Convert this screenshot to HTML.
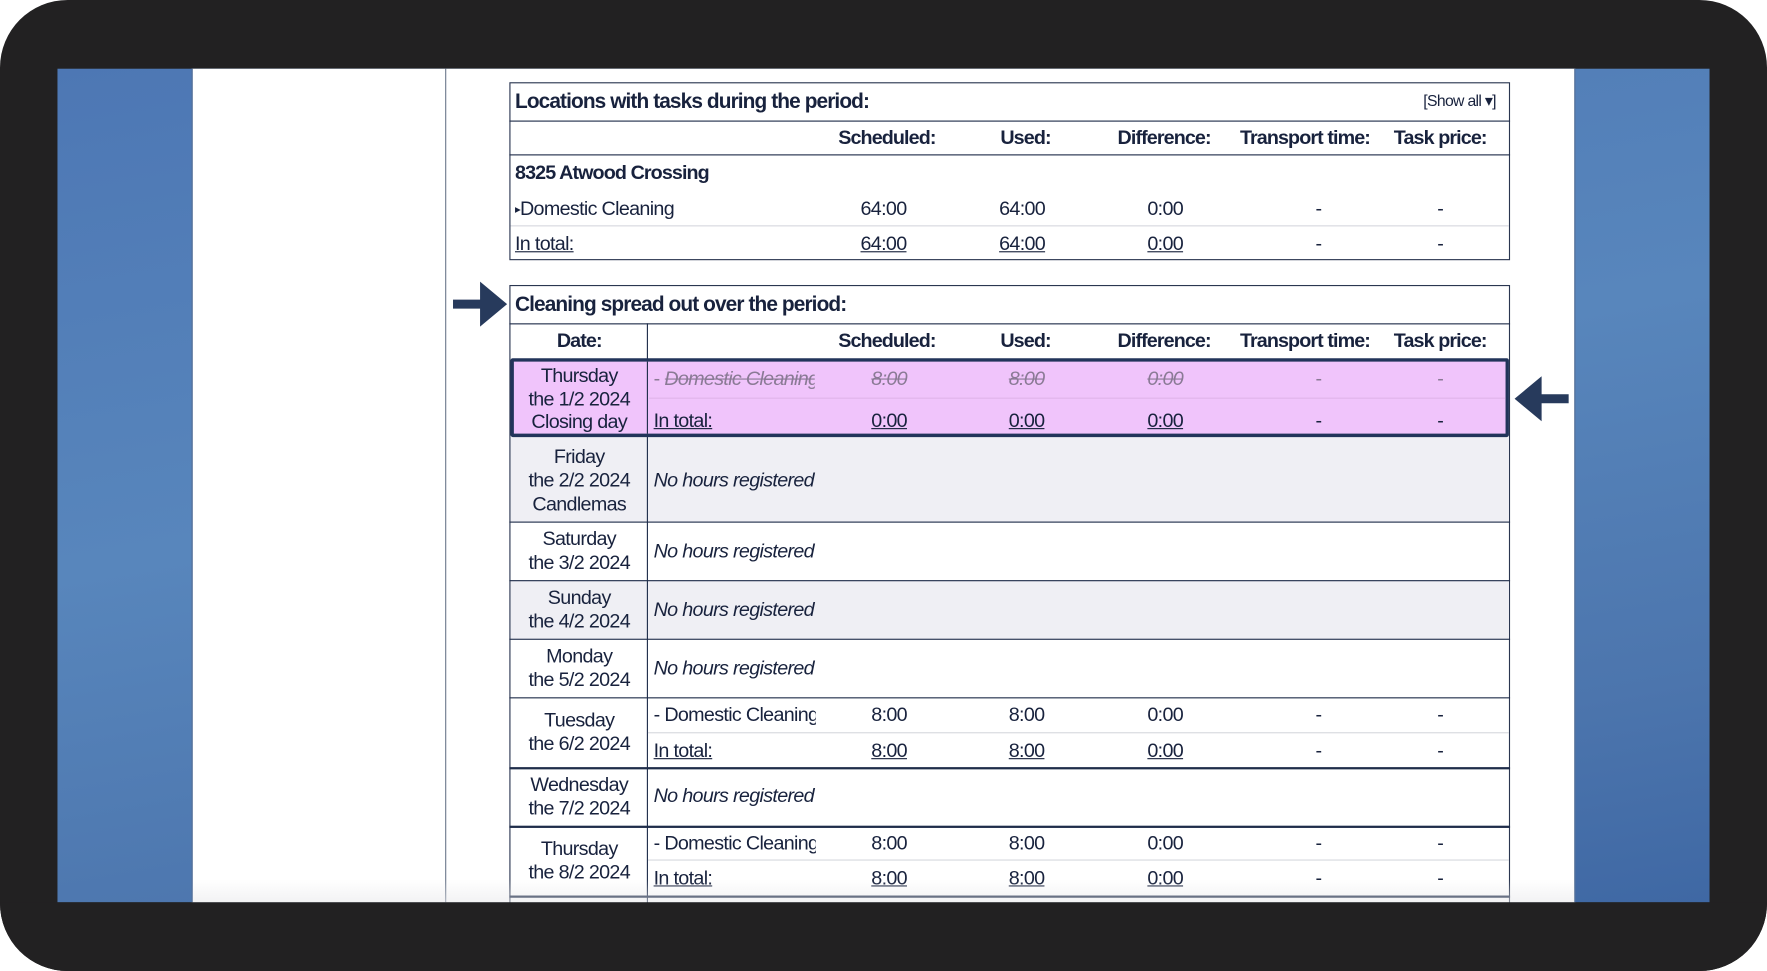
<!DOCTYPE html>
<html><head><meta charset="utf-8">
<style>
html,body{margin:0;padding:0;width:1767px;height:971px;overflow:hidden;background:#fff}
#stage{position:absolute;left:0;top:0;width:1568px;height:862px;transform:scale(1.12691,1.12645);transform-origin:0 0;background:#222122;border-radius:60px;overflow:hidden;font-family:"Liberation Sans",sans-serif;color:#18223d;font-size:17.5px;letter-spacing:-0.6px}
.a{position:absolute;white-space:nowrap}
.c{transform:translateX(-50%);text-align:center}
.b{font-weight:bold;letter-spacing:-0.8px}
.u{text-decoration:underline}
.i{font-style:italic}
.hl{position:absolute;background:#1f2d4a}
.ll{position:absolute;background:#d6d8de}
.st{text-decoration:line-through;color:#8a7a95;font-style:italic}
</style></head><body>
<div id="stage">
  <div class="a" style="left:51px;top:61px;width:1466px;height:740px;background:linear-gradient(170deg,#4d77b4,#5886bc 45%,#4c75ad 80%,#3f68a4)"></div>
  <div class="a" style="left:170px;top:61px;width:1228px;height:740px;background:#fff;border-left:1px solid #3b5b8a;border-right:1px solid #3b5b8a;box-sizing:border-box"></div>
  <div class="a" style="left:395px;top:61px;width:1px;height:740px;background:#6e7a8e"></div>

  <!-- Table 1 -->
  <div class="a" style="left:452px;top:73px;width:888px;height:158px;border:1px solid #2a3650;box-sizing:border-box"></div>
  <div class="hl" style="left:452px;top:107px;width:888px;height:1px"></div>
  <div class="hl" style="left:452px;top:137px;width:888px;height:1px"></div>
  <div class="ll" style="left:453px;top:200px;width:886px;height:1px"></div>
  <div class="a b" style="left:457px;top:79px;font-size:18.5px">Locations with tasks during the period:</div>
  <div class="a" style="left:1263px;top:81px;font-size:14px">[Show all ▾]</div>
  <div class="a b c" style="left:787px;top:112px">Scheduled:</div>
  <div class="a b c" style="left:910px;top:112px">Used:</div>
  <div class="a b c" style="left:1033px;top:112px">Difference:</div>
  <div class="a b c" style="left:1158px;top:112px">Transport time:</div>
  <div class="a b c" style="left:1278px;top:112px">Task price:</div>
  <div class="a b" style="left:457px;top:143px">8325 Atwood Crossing</div>
  <div class="a" style="left:457px;top:175px"><span style="font-size:10px;vertical-align:2px">▸</span>Domestic Cleaning</div>
  <div class="a c" style="left:784px;top:175px">64:00</div>
  <div class="a c" style="left:907px;top:175px">64:00</div>
  <div class="a c" style="left:1034px;top:175px">0:00</div>
  <div class="a c" style="left:1170px;top:175px">-</div>
  <div class="a c" style="left:1278px;top:175px">-</div>
  <div class="a u" style="left:457px;top:206px">In total:</div>
  <div class="a c u" style="left:784px;top:206px">64:00</div>
  <div class="a c u" style="left:907px;top:206px">64:00</div>
  <div class="a c u" style="left:1034px;top:206px">0:00</div>
  <div class="a c" style="left:1170px;top:206px">-</div>
  <div class="a c" style="left:1278px;top:206px">-</div>

  <!-- Table 2 -->
  <div class="a" style="left:452px;top:253px;width:888px;height:560px;border:1px solid #2a3650;box-sizing:border-box"></div>
  <div class="a" style="left:453px;top:388px;width:886px;height:75px;background:#efeff4"></div>
  <div class="a" style="left:453px;top:515px;width:886px;height:52px;background:#efeff4"></div>
  <div class="hl" style="left:452px;top:287px;width:888px;height:1px"></div>
  <div class="hl" style="left:574px;top:287px;width:1px;height:530px"></div>
  <div class="hl" style="left:452px;top:463px;width:888px;height:1px"></div>
  <div class="hl" style="left:452px;top:515px;width:888px;height:1px"></div>
  <div class="hl" style="left:452px;top:567px;width:888px;height:1px"></div>
  <div class="hl" style="left:452px;top:619px;width:888px;height:1px"></div>
  <div class="hl" style="left:452px;top:681px;width:888px;height:1.5px"></div>
  <div class="hl" style="left:452px;top:733px;width:888px;height:1.5px"></div>
  <div class="hl" style="left:452px;top:795px;width:888px;height:1.5px"></div>
  <div class="ll" style="left:575px;top:650px;width:764px;height:1px"></div>
  <div class="ll" style="left:575px;top:763px;width:764px;height:1px"></div>

  <div class="a b" style="left:457px;top:259px;font-size:18.5px">Cleaning spread out over the period:</div>
  <div class="a b c" style="left:514px;top:292px">Date:</div>
  <div class="a b c" style="left:787px;top:292px">Scheduled:</div>
  <div class="a b c" style="left:910px;top:292px">Used:</div>
  <div class="a b c" style="left:1033px;top:292px">Difference:</div>
  <div class="a b c" style="left:1158px;top:292px">Transport time:</div>
  <div class="a b c" style="left:1278px;top:292px">Task price:</div>

  <!-- highlighted -->
  <div class="a" style="left:453px;top:318px;width:886px;height:70px;background:#f0c4fb;border:3px solid #22345a;box-sizing:border-box;border-radius:2px"></div>
  <div class="hl" style="left:574px;top:321px;width:1px;height:64px"></div>
  <div class="ll" style="left:576px;top:353px;width:760px;height:1px;background:#e0b5ea"></div>
  <div class="a c" style="left:514px;top:323px;line-height:20.5px">Thursday<br>the 1/2 2024<br>Closing day</div>
  <div class="a" style="left:580px;top:326px;color:#8a7a95">- <span class="st" style="display:inline-block;width:133px;overflow:hidden;vertical-align:top">Domestic Cleaning</span></div>
  <div class="a c st" style="left:789px;top:326px">8:00</div>
  <div class="a c st" style="left:911px;top:326px">8:00</div>
  <div class="a c st" style="left:1034px;top:326px">0:00</div>
  <div class="a c" style="left:1170px;top:326px;color:#8a7a95">-</div>
  <div class="a c" style="left:1278px;top:326px;color:#8a7a95">-</div>
  <div class="a u" style="left:580px;top:363px">In total:</div>
  <div class="a c u" style="left:789px;top:363px">0:00</div>
  <div class="a c u" style="left:911px;top:363px">0:00</div>
  <div class="a c u" style="left:1034px;top:363px">0:00</div>
  <div class="a c" style="left:1170px;top:363px">-</div>
  <div class="a c" style="left:1278px;top:363px">-</div>

  <div class="a c" style="left:514px;top:395px;line-height:21px">Friday<br>the 2/2 2024<br>Candlemas</div>
  <div class="a i" style="left:580px;top:416px">No hours registered</div>
  <div class="a c" style="left:514px;top:468px;line-height:21px">Saturday<br>the 3/2 2024</div>
  <div class="a i" style="left:580px;top:479px">No hours registered</div>
  <div class="a c" style="left:514px;top:520px;line-height:21px">Sunday<br>the 4/2 2024</div>
  <div class="a i" style="left:580px;top:531px">No hours registered</div>
  <div class="a c" style="left:514px;top:572px;line-height:21px">Monday<br>the 5/2 2024</div>
  <div class="a i" style="left:580px;top:583px">No hours registered</div>

  <div class="a c" style="left:514px;top:629px;line-height:21px">Tuesday<br>the 6/2 2024</div>
  <div class="a" style="left:580px;top:624px">- <span style="display:inline-block;width:134px;overflow:hidden;vertical-align:top">Domestic Cleaning</span></div>
  <div class="a c" style="left:789px;top:624px">8:00</div>
  <div class="a c" style="left:911px;top:624px">8:00</div>
  <div class="a c" style="left:1034px;top:624px">0:00</div>
  <div class="a c" style="left:1170px;top:624px">-</div>
  <div class="a c" style="left:1278px;top:624px">-</div>
  <div class="a u" style="left:580px;top:656px">In total:</div>
  <div class="a c u" style="left:789px;top:656px">8:00</div>
  <div class="a c u" style="left:911px;top:656px">8:00</div>
  <div class="a c u" style="left:1034px;top:656px">0:00</div>
  <div class="a c" style="left:1170px;top:656px">-</div>
  <div class="a c" style="left:1278px;top:656px">-</div>

  <div class="a c" style="left:514px;top:686px;line-height:21px">Wednesday<br>the 7/2 2024</div>
  <div class="a i" style="left:580px;top:696px">No hours registered</div>

  <div class="a c" style="left:514px;top:743px;line-height:21px">Thursday<br>the 8/2 2024</div>
  <div class="a" style="left:580px;top:738px">- <span style="display:inline-block;width:134px;overflow:hidden;vertical-align:top">Domestic Cleaning</span></div>
  <div class="a c" style="left:789px;top:738px">8:00</div>
  <div class="a c" style="left:911px;top:738px">8:00</div>
  <div class="a c" style="left:1034px;top:738px">0:00</div>
  <div class="a c" style="left:1170px;top:738px">-</div>
  <div class="a c" style="left:1278px;top:738px">-</div>
  <div class="a u" style="left:580px;top:769px">In total:</div>
  <div class="a c u" style="left:789px;top:769px">8:00</div>
  <div class="a c u" style="left:911px;top:769px">8:00</div>
  <div class="a c u" style="left:1034px;top:769px">0:00</div>
  <div class="a c" style="left:1170px;top:769px">-</div>
  <div class="a c" style="left:1278px;top:769px">-</div>

  <!-- bottom fade -->
  <div class="a" style="left:171px;top:781px;width:1226px;height:20px;background:linear-gradient(rgba(235,235,237,0),rgba(230,230,233,0.5))"></div>

  <!-- arrows -->
  <svg class="a" style="left:400px;top:248px" width="52" height="44" viewBox="0 0 52 44"><path d="M2 18h24V2l24 20-24 20V26H2z" fill="#273a5c"/></svg>
  <svg class="a" style="left:1342px;top:332px" width="52" height="44" viewBox="0 0 52 44"><path d="M50 18H26V2L2 22l24 20V26h24z" fill="#273a5c"/></svg>

  <div class="a" style="left:0;top:801px;width:1568px;height:61px;background:#222122"></div>
</div>
</body></html>
